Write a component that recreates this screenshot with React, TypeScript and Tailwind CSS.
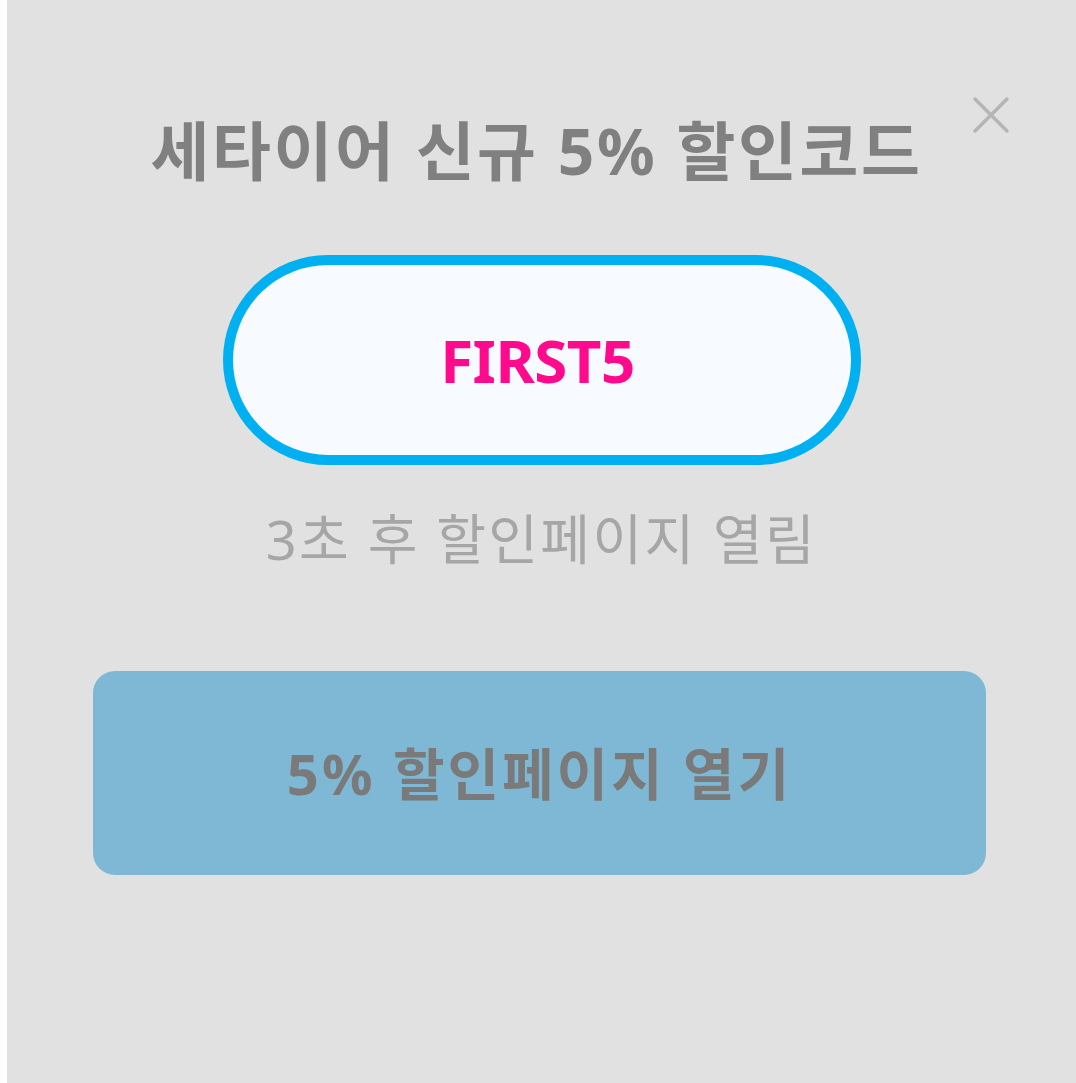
import React from 'react';

const font = { fontFamily: '"Noto Sans", "Noto Sans CJK KR", sans-serif' };

export default function App() {
  return (
    <div className="min-h-screen bg-white pl-[7px]" style={font}>
      <div className="relative min-h-[1083px] bg-[#e1e1e1] flex flex-col items-center">
        {/* close */}
        <button className="absolute left-[964px] top-[95px] w-[40px] h-[40px] text-[#b5b5b5]">
          <svg viewBox="0 0 40 40" width="40" height="40" fill="none" stroke="currentColor" strokeWidth="3.5" strokeLinecap="round">
            <path d="M4 4 L36 36 M36 4 L4 36" />
          </svg>
        </button>

        <h1 className="mt-[119px] text-[64px] leading-none font-bold text-[#808080] tracking-[2.6px] -translate-x-[5px]">
          세타이어 신규 5% 할인코드
        </h1>

        <div className="mt-[72px] w-[638px] h-[210px] rounded-full border-[10px] border-[#00b0f0] bg-[#f7fbff] flex items-center justify-center">
          <span className="text-[60px] leading-none font-bold text-[#ff0a8c] -translate-x-[4px] tracking-[-0.5px]">FIRST5</span>
        </div>

        <p className="mt-[47px] text-[54px] leading-none text-[#a6a6a6] tracking-[2.4px]">
          3초 후 할인페이지 열림
        </p>

        <button className="mt-[105px] w-[893px] h-[204px] rounded-[22px] bg-[#7fb8d4] flex items-center justify-center -translate-x-[2px]">
          <span className="text-[56px] leading-none font-bold text-[#7a7a7a] tracking-[3px]">5% 할인페이지 열기</span>
        </button>
      </div>
    </div>
  );
}
